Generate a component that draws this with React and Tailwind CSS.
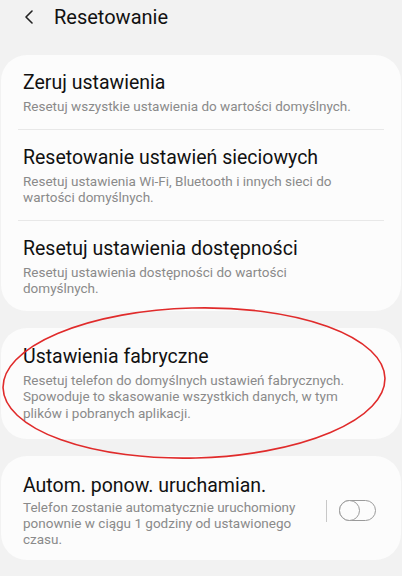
import React from "react";

const font = { fontFamily: "Roboto, 'Noto Sans', sans-serif" };

function Item({ title, desc, divider, className = "" }) {
  return (
    <div className={`px-[17px] ${className}`}>
      <div className={`pb-[14px] pl-[5px] pr-[24px] ${divider ? "border-b border-[#e8e8e8]" : ""}`}>
        <div className="text-[19.5px] leading-[24px] text-[#111]">{title}</div>
        <div className="mt-[3px] text-[13.5px] leading-[16.5px] text-[#8a8a8a]">{desc}</div>
      </div>
    </div>
  );
}

export default function App() {
  return (
    <div className="relative w-[402px] h-[576px] overflow-hidden bg-[#f2f2f2]" style={font}>
      {/* Header */}
      <div className="flex items-center h-[34px] pl-[24px]">
        <svg width="10" height="14" viewBox="0 0 10 14" className="text-[#222]">
          <path d="M8 1 L2 7 L8 13" fill="none" stroke="currentColor" strokeWidth="1.6" strokeLinecap="round" strokeLinejoin="round" />
        </svg>
        <span className="ml-[20px] text-[20px] text-[#111]">Resetowanie</span>
      </div>

      <div className="mt-[21px] flex flex-col gap-[17px]">
        {/* Card 1 */}
        <div className="bg-[#fcfcfc] rounded-[26px] mx-[1px] pt-[16px]">
          <Item
            title="Zeruj ustawienia"
            desc="Resetuj wszystkie ustawienia do wartości domyślnych."
            divider
          />
          <Item
            className="pt-[16px]"
            title="Resetowanie ustawień sieciowych"
            desc="Resetuj ustawienia Wi-Fi, Bluetooth i innych sieci do wartości domyślnych."
            divider
          />
          <Item
            className="pt-[16px]"
            title="Resetuj ustawienia dostępności"
            desc="Resetuj ustawienia dostępności do wartości domyślnych."
          />
        </div>

        {/* Card 2 */}
        <div className="bg-[#fcfcfc] rounded-[26px] mx-[1px] pt-[17px]">
          <div className="pl-[22px] pb-[18px] pr-[41px]">
            <div className="text-[19.5px] leading-[24px] text-[#111]">Ustawienia fabryczne</div>
            <div className="mt-[3px] text-[13.5px] leading-[16.5px] text-[#8a8a8a]">
              Resetuj telefon do domyślnych ustawień fabrycznych. Spowoduje to skasowanie wszystkich danych, w tym plików i pobranych aplikacji.
            </div>
          </div>
        </div>

        {/* Card 3 */}
        <div className="bg-[#fcfcfc] rounded-[26px] mx-[1px] pt-[18px] pb-[13px] pl-[22px] pr-[25px] flex items-center">
          <div className="flex-1">
            <div className="text-[19.5px] leading-[24px] text-[#111]">Autom. ponow. uruchamian.</div>
            <div className="mt-[1px] text-[13.5px] leading-[16px] text-[#8a8a8a] pr-[6px]">
              Telefon zostanie automatycznie uruchomiony ponownie w ciągu 1 godziny od ustawionego czasu.
            </div>
          </div>
          <div className="flex items-center">
            <div className="w-px h-[22px] bg-[#c8c8c8]" />
            <div className="ml-[12px] relative w-[37px] h-[21px] rounded-full border-[1.5px] border-[#9a9a9a]">
              <div className="absolute -left-[1.5px] -top-[1.5px] w-[21px] h-[21px] rounded-full border-[1.5px] border-[#9a9a9a] bg-[#fcfcfc]" />
            </div>
          </div>
        </div>
      </div>

      {/* Red annotation ellipse */}
      <svg className="absolute left-0 top-0 pointer-events-none" width="402" height="576">
        <ellipse cx="194" cy="383" rx="191" ry="75" fill="none" stroke="#e02b2b" strokeWidth="1.6" transform="rotate(-1.5 194 383)" />
      </svg>
    </div>
  );
}
